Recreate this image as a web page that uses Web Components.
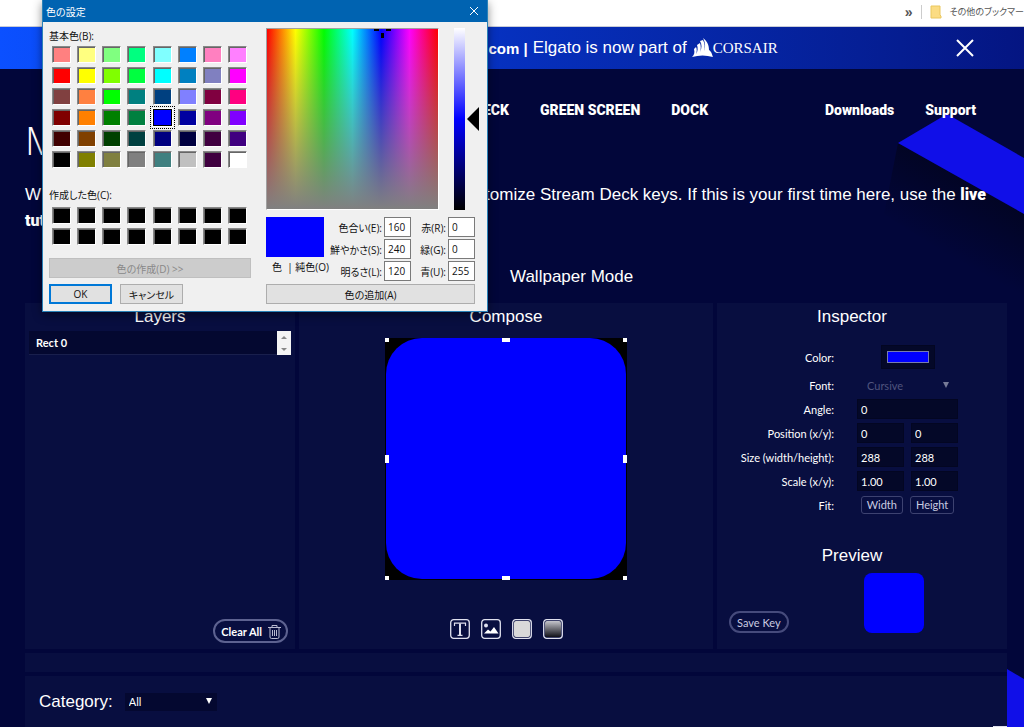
<!DOCTYPE html>
<html lang="en">
<head>
<meta charset="utf-8">
<title>Key Creator</title>
<style>
    body {
        margin: 0;
        background: #02063a;
        font-family: "Liberation Sans", "Noto Sans CJK JP", sans-serif;
        color: #fff;
    }
</style>
</head>
<body>
<key-creator-app></key-creator-app>

<script>
class BookmarkBar extends HTMLElement {
    constructor() {
        super();
        this.attachShadow({ mode: 'open' });
        this.shadowRoot.innerHTML = `
            <style>
                :host {
                    display: flex;
                    justify-content: flex-end;
                    align-items: center;
                    gap: 8px;
                    height: 27px;
                    box-sizing: border-box;
                    padding-bottom: 3px;
                    border-bottom: 1px solid #c8ccd8;
                    background: #fff;
                    color: #555;
                    font: 9px "Noto Sans CJK JP", sans-serif;
                    font-feature-settings: "palt";
                    white-space: nowrap;
                }
                .more { font: bold 14px "Liberation Sans", sans-serif; }
                .line { width: 1px; height: 14px; background: #ccc; }
                svg { display: block; }
            </style>
            <span class="more">»</span>
            <span class="line"></span>
            <svg width="12" height="14" viewBox="0 0 12 14"><path d="M1 1h9v9l1 1v2H1z" fill="#fbdc83" stroke="#eac75f"/></svg>
            <span>その他のブックマー</span>
        `;
    }
}
customElements.define('bookmark-bar', BookmarkBar);

class PromoBanner extends HTMLElement {
    constructor() {
        super();
        this.attachShadow({ mode: 'open' });
        this.shadowRoot.innerHTML = `
            <style>
                :host {
                    display: grid;
                    grid-template-columns: 47fr 39fr 14fr;
                    align-items: center;
                    height: 42px;
                    background: linear-gradient(90deg, #0b50ff, #0631c0 48%, #051d91 88%, #041582);
                    font-size: 17px;
                    white-space: nowrap;
                }
                .text { grid-column: 2; display: flex; align-items: center; gap: 5px; padding-left: 3px; }
                b { font-size: 15px; }
                .logo { display: flex; align-items: center; font: 15px "Liberation Serif", serif; }
                button {
                    justify-self: start;
                    margin-left: 75px;
                    padding: 0;
                    border: 0;
                    background: none;
                }
                svg { display: block; }
            </style>
            <div class="text">
                <b>.com |</b>
                <span>Elgato is now part of</span>
                <span class="logo">
                    <svg width="21" height="22" viewBox="0 0 21 22" fill="#fff">
                        <path d="M0 20c2-2 3-4 2-8l2-2c1 2 1 4 0 7 2-3 2-6 1-9l3-2c1 3 1 6 0 9 2-4 2-8 0-11l3-1c2 4 2 7 1 11 2-5 1-9-1-13 5 4 6 8 6 12 3 2 3 5 4 7-7-2-14-2-21 0z"/>
                    </svg>
                    CORSAIR
                </span>
            </div>
            <button aria-label="Close banner">
                <svg width="18" height="18" viewBox="0 0 18 18" stroke="#fff" stroke-width="2"><path d="M1 1l16 16M17 1L1 17"/></svg>
            </button>
        `;
    }
}
customElements.define('promo-banner', PromoBanner);

class SiteNav extends HTMLElement {
    constructor() {
        super();
        this.attachShadow({ mode: 'open' });
        this.shadowRoot.innerHTML = `
            <style>
                :host { display: block; font: 900 14px Roboto, sans-serif; }
                nav {
                    display: flex;
                    gap: 31px;
                    align-items: center;
                    height: 82px;
                    box-sizing: border-box;
                    padding: 0 48px 0 483px;
                }
                a { color: #fff; text-decoration: none; white-space: nowrap; }
                .side { margin-left: auto; }
            </style>
            <nav>
                <a href="#">ECK</a>
                <a href="#">GREEN SCREEN</a>
                <a href="#">DOCK</a>
                <a href="#" class="side">Downloads</a>
                <a href="#">Support</a>
            </nav>
        `;
    }
}
customElements.define('site-nav', SiteNav);

class PageIntro extends HTMLElement {
    constructor() {
        super();
        this.attachShadow({ mode: 'open' });
        this.shadowRoot.innerHTML = `
            <style>
                :host { display: block; height: 146px; box-sizing: border-box; padding-right: 21px; margin-top: -34px; }
                h1 {
                    margin: 0;
                    font: 300 39px/46px "Open Sans", sans-serif;
                }
                p {
                    display: flex;
                    justify-content: space-between;
                    margin: 19px 0 0;
                    font-size: 17px;
                    line-height: 26px;
                    white-space: nowrap;
                }
                p.second { margin-top: 0; }
                a { color: #fff; font: 900 16px/26px Roboto, sans-serif; text-decoration: none; }
            </style>
            <h1>M</h1>
            <p><span>W</span><span>tomize Stream Deck keys. If this is your first time here, use the <a href="#">live</a></span></p>
            <p class="second"><a href="#">tut</a></p>
        `;
    }
}
customElements.define('page-intro', PageIntro);

class EditorPanel extends HTMLElement {
    constructor() {
        super();
        this.attachShadow({ mode: 'open' });
        this.shadowRoot.innerHTML = `
            <style>
                :host {
                    display: flex;
                    flex-direction: column;
                    background: #080e40;
                }
                h2 {
                    margin: 0;
                    font-size: 17px;
                    font-weight: normal;
                    line-height: 28px;
                    text-align: center;
                }
            </style>
            <h2>${this.getAttribute('heading')}</h2>
            <slot></slot>
        `;
    }
}
customElements.define('editor-panel', EditorPanel);

class LayerList extends HTMLElement {
    constructor() {
        super();
        this.attachShadow({ mode: 'open' });
        this.shadowRoot.innerHTML = `
            <style>
                :host { flex: 1; display: flex; flex-direction: column; padding: 0 4px 6px; font: 11px Lato, sans-serif; }
                .row { display: flex; height: 24px; background: #040830; }
                .layer { flex: 1; padding: 0 7px; border-bottom: 1px solid #191f4c; line-height: 24px; font-weight: bold; }
                .scroll { display: flex; flex-direction: column; width: 14px; background: #f4f4f4; }
                .scroll button { flex: 1; display: grid; place-items: center; border: 0; padding: 0; background: none; }
                .clear {
                    display: flex;
                    align-items: center;
                    gap: 6px;
                    align-self: flex-end;
                    height: 24px;
                    box-sizing: border-box;
                    margin: auto 3px 0 0;
                    padding: 0 5px 0 6px;
                    border: 2px solid #5d6290;
                    border-radius: 12px;
                    background: none;
                    color: #fff;
                    font: bold 11px Lato, sans-serif;
                }
            </style>
            <div class="row">
                <div class="layer">Rect 0</div>
                <div class="scroll">
                    <button aria-label="Scroll up"><svg width="6" height="3"><path d="M0 3l3-3 3 3z" fill="#888"/></svg></button>
                    <button aria-label="Scroll down"><svg width="6" height="3"><path d="M0 0l3 3 3-3z" fill="#888"/></svg></button>
                </div>
            </div>
            <button class="clear">Clear All
                <svg width="13" height="15" viewBox="0 0 13 15" fill="none" stroke="#b8bad0">
                    <path d="M0 3.500h13M4 3V1.500h5V3M2 4v9q0 1.500 1.500 1.500h6q1.500 0 1.500-1.500V4M4.500 6v6M6.500 6v6M8.500 6v6"/>
                </svg>
            </button>
        `;
    }
}
customElements.define('layer-list', LayerList);

class ComposeStage extends HTMLElement {
    constructor() {
        super();
        this.attachShadow({ mode: 'open' });
        this.shadowRoot.innerHTML = `
            <style>
                :host { flex: 1; display: flex; flex-direction: column; align-items: center; padding: 7px 0 10px; }
                svg { display: block; }
                .tools { display: flex; gap: 11px; margin-top: auto; }
                .tools button { padding: 0; border: 0; background: none; }
            </style>
            <svg width="242" height="242" viewBox="0 0 242 242" role="img" aria-label="Key artwork">
                <path fill="#000" d="M0 0h242v242H0z"/>
                <rect x="1" width="240" height="241" rx="36" fill="#00f"/>
                <path fill="#fff" d="M0 0h4v4H0zM117 0h8v4h-8zM238 0h4v4h-4zM0 117h4v8H0zM238 117h4v8h-4zM0 238h4v4H0zM117 238h8v4h-8zM238 238h4v4h-4z"/>
            </svg>
            <div class="tools">
                <button aria-label="Add text">
                    <svg width="20" height="20" viewBox="0 0 20 20" fill="none" stroke="#dfe0ee">
                        <rect x=".7" y=".7" width="18.600" height="18.600" rx="3" stroke-width="1.300"/>
                        <path d="M4.500 7V4.200h11V7M7.500 16.300h5" stroke-width="1.200"/><path d="M10 4.500v12" stroke-width="2"/>
                    </svg>
                </button>
                <button aria-label="Add image">
                    <svg width="20" height="20" viewBox="0 0 20 20">
                        <rect x=".7" y=".7" width="18.600" height="18.600" rx="3" fill="none" stroke="#dfe0ee" stroke-width="1.300"/>
                        <circle cx="5" cy="6.500" r="2" fill="#dfe0ee"/><path d="M3 14.500l4-4 2.500 2L13 8l4.500 6.500z" fill="#fff"/>
                    </svg>
                </button>
                <button aria-label="Add rectangle">
                    <svg width="20" height="20" viewBox="0 0 20 20">
                        <rect x=".7" y=".7" width="18.600" height="18.600" rx="3" fill="none" stroke="#dfe0ee" stroke-width="1.300"/>
                        <rect x="2" y="2" width="16" height="16" rx="2" fill="#d9d9d9"/>
                    </svg>
                </button>
                <button aria-label="Add gradient">
                    <svg width="20" height="20" viewBox="0 0 20 20">
                        <linearGradient id="shade" x2="0" y2="1"><stop stop-color="#c5c5cc"/><stop offset="1" stop-color="#101018"/></linearGradient>
                        <rect x=".7" y=".7" width="18.600" height="18.600" rx="3" fill="none" stroke="#dfe0ee" stroke-width="1.300"/>
                        <rect x="2" y="2" width="16" height="16" rx="2" fill="url(#shade)"/>
                    </svg>
                </button>
            </div>
        `;
    }
}
customElements.define('compose-stage', ComposeStage);

class KeyInspector extends HTMLElement {
    constructor() {
        super();
        this.attachShadow({ mode: 'open' });
        this.shadowRoot.innerHTML = `
            <style>
                :host { flex: 1; display: flex; flex-direction: column; padding: 12px 0 16px; font: 11px Lato, sans-serif; }
                .row {
                    display: grid;
                    grid-template-columns: 117px 101px;
                    column-gap: 23px;
                    align-items: center;
                    height: 20px;
                    margin-top: 4px;
                }
                .row > label, .row > .label { text-align: right; white-space: nowrap; }
                .fields { display: flex; gap: 7px; }
                .color .fields, .fit .fields { justify-content: center; }
                .color { height: 28px; margin-top: 0; }
                input[type=text] {
                    flex: 1;
                    min-width: 0;
                    height: 20px;
                    box-sizing: border-box;
                    padding: 0 3px;
                    border: 1px solid #030622;
                    background: #040828;
                    color: #fff;
                    font: inherit;
                }
                input[type=color] {
                    width: 54px;
                    height: 24px;
                    box-sizing: border-box;
                    padding: 5px;
                    border: 1px solid #030622;
                    background: #040828;
                }
                input[type=color]::-webkit-color-swatch-wrapper { padding: 0; }
                input[type=color]::-webkit-color-swatch { border: 1px solid #777bb0; border-radius: 0; }
                select {
                    flex: 1;
                    appearance: none;
                    padding: 0 10px;
                    border: 0;
                    background: url('data:image/svg+xml,<svg xmlns="http://www.w3.org/2000/svg" width="6" height="6"><path d="M0 0h6L3 6z" fill="%23777b98"/></svg>') no-repeat right 9px top 3px;
                    color: #50557e;
                    opacity: 1;
                    font: inherit;
                }
                .fields button {
                    height: 18px;
                    padding: 0 5px;
                    border: 1px solid #3d4270;
                    border-radius: 3px;
                    background: none;
                    color: #c9cbe0;
                    font: 11px/16px Lato, sans-serif;
                }
                h2 {
                    margin: 27px 0 0;
                    font: 17px/28px "Liberation Sans", sans-serif;
                    text-align: center;
                }
                .preview { display: flex; align-items: flex-end; justify-content: space-between; padding: 0 63px 0 12px; margin-top: 3px; }
                .save {
                    height: 22px;
                    padding: 0 6px;
                    border: 2px solid #464b7c;
                    border-radius: 11px;
                    background: none;
                    color: #c9cbe0;
                    font: inherit;
                }
                .key { width: 60px; height: 60px; border-radius: 8px; background: #00f; }
            </style>
            <div class="row color"><label for="color">Color:</label><div class="fields"><input type="color" id="color" value="#0000ff"></div></div>
            <div class="row"><label for="font">Font:</label><div class="fields"><select id="font" disabled><option>Cursive</option></select></div></div>
            <div class="row"><label for="angle">Angle:</label><div class="fields"><input type="text" id="angle" value="0"></div></div>
            <div class="row"><label for="x">Position (x/y):</label><div class="fields"><input type="text" id="x" value="0"><input type="text" aria-label="Position y" value="0"></div></div>
            <div class="row"><label for="w">Size (width/height):</label><div class="fields"><input type="text" id="w" value="288"><input type="text" aria-label="Height" value="288"></div></div>
            <div class="row"><label for="sx">Scale (x/y):</label><div class="fields"><input type="text" id="sx" value="1.00"><input type="text" aria-label="Scale y" value="1.00"></div></div>
            <div class="row fit"><span class="label">Fit:</span><div class="fields"><button>Width</button><button>Height</button></div></div>
            <h2>Preview</h2>
            <div class="preview"><button class="save">Save Key</button><div class="key"></div></div>
        `;
    }
}
customElements.define('key-inspector', KeyInspector);

const BASIC_COLORS = `
    #ff8080 #ffff80 #80ff80 #00ff80 #80ffff #0080ff #ff80c0 #ff80ff
    #ff0000 #ffff00 #80ff00 #00ff40 #00ffff #0080c0 #8080c0 #ff00ff
    #804040 #ff8040 #00ff00 #008080 #004080 #8080ff #800040 #ff0080
    #800000 #ff8000 #008000 #008040 #0000ff #0000a0 #800080 #8000ff
    #400000 #804000 #004000 #004040 #000080 #000040 #400040 #400080
    #000000 #808000 #808040 #808080 #408080 #c0c0c0 #400040 #ffffff
`.trim().split(/\s+/);

class SwatchGrid extends HTMLElement {
    constructor() {
        super();
        this.attachShadow({ mode: 'open' });
        this.shadowRoot.innerHTML = `
            <style>
                :host { display: grid; grid-template-columns: repeat(8, 19px); justify-content: space-between; gap: 4px 0; padding: 0 4px 0 3px; }
                button {
                    height: 17px;
                    padding: 0;
                    border: 1px solid;
                    border-color: #888 #fff #fff #888;
                    box-shadow: inset 1px 1px #666;
                }
                .selected { border-color: #000; box-shadow: 0 0 0 1px #fff; outline: 1px dotted #000; outline-offset: 2px; }
            </style>
        `;
    }

    connectedCallback() {
        const custom = this.hasAttribute('custom');
        const colors = custom ? Array(16).fill('#000000') : BASIC_COLORS;
        colors.forEach((color) => {
            const btn = document.createElement('button');
            btn.style.backgroundColor = color;
            btn.setAttribute('aria-label', color);
            if (color === '#0000ff') btn.className = 'selected';
            this.shadowRoot.append(btn);
        });
    }
}
customElements.define('swatch-grid', SwatchGrid);

class ColorDialog extends HTMLElement {
    constructor() {
        super();
        this.attachShadow({ mode: 'open' });
        this.shadowRoot.innerHTML = `
            <style>
                :host {
                    display: block;
                    width: 446px;
                    box-sizing: border-box;
                    border: 1px solid #2a82b8;
                    border-top: 0;
                    background: #f0f0f0;
                    color: #111;
                    font: 10px "Open Sans", "Noto Sans CJK JP", sans-serif;
                    font-feature-settings: "palt";
                    box-shadow: 0 3px 9px rgba(0, 0, 0, .45);
                }
                header {
                    display: flex;
                    justify-content: space-between;
                    align-items: center;
                    height: 22px;
                    padding: 0 8px 0 3px;
                    background: #0063b1;
                    color: #fff;
                }
                header button { padding: 0; border: 0; background: none; }
                svg { display: block; }
                .body { display: grid; grid-template-columns: 202px 209px; gap: 15px; padding: 6px 6px 7px; }
                .left { display: flex; flex-direction: column; }
                .caption { line-height: 16px; margin-bottom: 2px; }
                .custom { margin: 19px 0 4px; }
                button.push {
                    height: 20px;
                    padding: 0;
                    border: 1px solid #adadad;
                    background: #e1e1e1;
                    color: #111;
                    font: inherit;
                    font-feature-settings: inherit;
                }
                button.push:disabled { border-color: #bfbfbf; background: #ccc; color: #888; }
                button.ok { border: 2px solid #0078d7; }
                .define { margin-top: 13px; }
                .actions { display: grid; grid-template-columns: 63px 63px; gap: 8px; margin-top: 6px; }
                .right { display: flex; flex-direction: column; }
                .pickers { display: flex; }
                .pickers > * { flex-shrink: 0; }
                .field {
                    width: 173px;
                    height: 182px;
                    border: 1px solid;
                    border-color: #a0a0a0 #fff #fff #a0a0a0;
                    box-sizing: border-box;
                    background:
                        linear-gradient(rgba(128, 128, 128, 0), #808080),
                        linear-gradient(90deg, red, #ff0, lime, cyan, blue, magenta, red);
                }
                .field svg { margin: 0 0 0 106px; }
                .shade {
                    width: 11px;
                    height: 182px;
                    margin: 0 2px 0 15px;
                    background: linear-gradient(#fff, #00f 50%, #000);
                }
                .pickers > svg { margin-top: 79px; }
                .values { display: grid; grid-template-columns: 58px 1fr; margin-top: 7px; }
                .solid { height: 40px; background: #00f; }
                .sample { padding-left: 6px; line-height: 20px; white-space: nowrap; }
                .nums {
                    display: grid;
                    grid-template-columns: 1fr 27px 33px 27px;
                    gap: 2px;
                    align-items: center;
                    text-align: right;
                    white-space: nowrap;
                }
                .nums input {
                    width: 27px;
                    height: 20px;
                    box-sizing: border-box;
                    padding: 0 3px;
                    border: 1px solid #7a7a7a;
                    background: #fff;
                    font: inherit;
                    color: #111;
                }
                .add { margin-top: 3px; }
            </style>
            <header><span>色の設定</span>
                <button aria-label="Close"><svg width="10" height="10" stroke="#fff"><path d="M1 1l8 8M9 1L1 9"/></svg></button>
            </header>
            <div class="body">
                <div class="left">
                    <div class="caption">基本色(B):</div>
                    <swatch-grid></swatch-grid>
                    <div class="caption custom">作成した色(C):</div>
                    <swatch-grid custom></swatch-grid>
                    <button class="push define" disabled>色の作成(D) &gt;&gt;</button>
                    <div class="actions"><button class="push ok">OK</button><button class="push">キャンセル</button></div>
                </div>
                <div class="right">
                    <div class="pickers">
                        <div class="field"><svg width="20" height="9" fill="#000"><path d="M1 0h5v2H1zM13 0h5v2h-5zM8 4h3v5H8z"/></svg></div>
                        <div class="shade"></div>
                        <svg width="12" height="24"><path d="M12 0v24L0 12z"/></svg>
                    </div>
                    <div class="values">
                        <div><div class="solid"></div><div class="sample">色 &nbsp;| 純色(O)</div></div>
                        <div class="nums">
                            <label for="hue">色合い(E):</label><input id="hue" value="160">
                            <label for="red">赤(R):</label><input id="red" value="0">
                            <label for="sat">鮮やかさ(S):</label><input id="sat" value="240">
                            <label for="green">緑(G):</label><input id="green" value="0">
                            <label for="lum">明るさ(L):</label><input id="lum" value="120">
                            <label for="blue">青(U):</label><input id="blue" value="255">
                        </div>
                    </div>
                    <button class="push add">色の追加(A)</button>
                </div>
            </div>
        `;
    }
}
customElements.define('color-dialog', ColorDialog);

class CategoryBar extends HTMLElement {
    constructor() {
        super();
        this.attachShadow({ mode: 'open' });
        this.shadowRoot.innerHTML = `
            <style>
                :host {
                    display: flex;
                    align-items: center;
                    gap: 12px;
                    height: 51px;
                    padding-left: 14px;
                    background: #080e40;
                    font-size: 17px;
                }
                select {
                    appearance: none;
                    width: 92px;
                    height: 18px;
                    padding: 0 4px;
                    border: 0;
                    background: #040830 url('data:image/svg+xml,<svg xmlns="http://www.w3.org/2000/svg" width="6" height="6"><path d="M0 0h6L3 6z" fill="white"/></svg>') no-repeat right 5px top 5px;
                    color: #fff;
                    font: 11px Lato, sans-serif;
                }
                .edge { align-self: flex-end; width: 14px; height: 1px; margin-left: auto; background: #dfe0ee; }
            </style>
            <label for="category">Category:</label>
            <select id="category"><option>All</option></select>
            <span class="edge"></span>
        `;
    }
}
customElements.define('category-bar', CategoryBar);

class KeyCreatorApp extends HTMLElement {
    constructor() {
        super();
        this.attachShadow({ mode: 'open' });
        this.shadowRoot.innerHTML = `
            <style>
                :host { display: block; position: relative; min-height: 100vh; overflow: hidden; }
                .backdrop { position: absolute; top: 69px; right: 0; z-index: -1; }
                main { display: block; padding: 0 17px 0 25px; }
                h2 { margin: 0; font-size: 17px; font-weight: normal; line-height: 28px; padding-left: 485px; }
                .panels {
                    display: grid;
                    grid-template-columns: 270fr 414fr 290fr;
                    gap: 4px;
                    min-height: 346px;
                    margin-top: 12px;
                }
                .inspector { padding-right: 20px; }
                .strip { height: 19px; margin: 4px 0; background: #080e40; }
                color-dialog { position: absolute; top: 0; left: 42px; }
            </style>
            <bookmark-bar></bookmark-bar>
            <promo-banner></promo-banner>
            <svg class="backdrop" width="200" height="658" viewBox="0 0 200 658">
                <linearGradient id="fade" gradientUnits="userSpaceOnUse" x1="140" y1="110" x2="104" y2="175"><stop stop-color="#02041f" stop-opacity=".8"/><stop offset="1" stop-color="#02041f" stop-opacity="0"/></linearGradient>
                <path d="M74 74l126 71v90L60 145z" fill="url(#fade)"/>
                <path d="M74 74l49-29 77 44v56z" fill="#100fe8"/>
                <path d="M183 600l17 10v48h-17z" fill="#100fe8"/>
            </svg>
            <site-nav></site-nav>
            <main>
                <page-intro></page-intro>
                <h2>Wallpaper Mode</h2>
                <div class="panels">
                    <editor-panel heading="Layers"><layer-list></layer-list></editor-panel>
                    <editor-panel heading="Compose"><compose-stage></compose-stage></editor-panel>
                    <editor-panel heading="Inspector" class="inspector"><key-inspector></key-inspector></editor-panel>
                </div>
                <div class="strip"></div>
                <category-bar></category-bar>
            </main>
            <color-dialog></color-dialog>
        `;
    }
}
customElements.define('key-creator-app', KeyCreatorApp);
</script>
</body>
</html>
